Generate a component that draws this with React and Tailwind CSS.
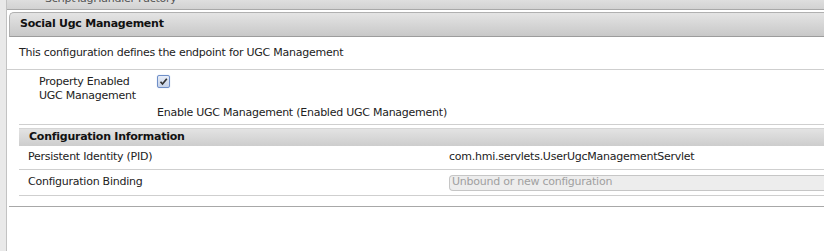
import React from "react";

export default function App() {
  const font = { fontFamily: '"DejaVu Sans", Verdana, sans-serif' };
  return (
    <div className="w-[824px] h-[251px] overflow-hidden bg-[#e9e9e9] flex text-[11px] tracking-[-0.25px] text-[#222]" style={font}>
      <div className="w-[6px] shrink-0" />
      <div className="flex-1 bg-white border-l border-[#c2c2c2] flex flex-col">
        <div className="h-[10px] bg-gradient-to-b from-[#dedede] to-[#d2d2d2] border-b border-[#a8a8a8] overflow-hidden relative">
          <div className="absolute left-[38px] top-[-9px] text-[#555] text-[11px]">ScriptTagHandler Factory</div>
        </div>
        <div className="h-[2px]" />
        <div className="ml-[2px] h-[25px] rounded-tl-[5px] border border-r-0 border-[#b0b0b0] border-b-[#9c9c9c] bg-gradient-to-b from-[#e4e4e4] to-[#c8c8c8] flex items-center pl-[10px] font-bold text-[#111]">
          Social Ugc Management
        </div>
        <div className="pl-[12px] pt-[8px] h-[33px] border-b border-[#cfcfcf]">
          This configuration defines the endpoint for UGC Management
        </div>
        <div className="ml-[12px] border-b border-[#cfcfcf] h-[55px] flex">
          <div className="w-[138px] pl-[20px] pt-[5px] leading-[14px]">
            Property Enabled<br />UGC Management
          </div>
          <div className="flex flex-col">
            <div className="mt-[5px] w-[13px] h-[13px] rounded-[2px] border border-[#6f8fc8] bg-gradient-to-b from-[#e8eef8] to-[#c6d2e8] flex items-center justify-center shadow-[0_0_1px_#9db4e0]">
              <svg width="9" height="9" viewBox="0 0 9 9"><path d="M1.5 4.8 L3.5 7 L7.8 1.8" stroke="#333" strokeWidth="1.7" fill="none" /></svg>
            </div>
            <div className="mt-[17px]">Enable UGC Management (Enabled UGC Management)</div>
          </div>
        </div>
        <div className="ml-[12px] mt-[3px] h-[18px] bg-gradient-to-b from-[#e3e3e3] to-[#cdcdcd] border-t border-[#d5d5d5] flex items-center pl-[10px] font-bold text-[#111]">
          Configuration Information
        </div>
        <div className="ml-[12px] h-[24px] border-b border-[#cfcfcf] flex items-center">
          <div className="w-[430px] pl-[9px]">Persistent Identity (PID)</div>
          <div>com.hmi.servlets.UserUgcManagementServlet</div>
        </div>
        <div className="ml-[12px] h-[26px] border-b border-[#cfcfcf] flex items-center">
          <div className="w-[430px] pl-[9px]">Configuration Binding</div>
          <div className="flex-1 h-[16px] rounded-l-[4px] border border-r-0 border-[#c6c6c6] bg-[#ededed] text-[#a0a0a0] pl-[2px] flex items-center">Unbound or new configuration</div>
        </div>
        <div className="h-[11px] border-b border-[#a8a8a8] ml-[2px]" />
      </div>
    </div>
  );
}
